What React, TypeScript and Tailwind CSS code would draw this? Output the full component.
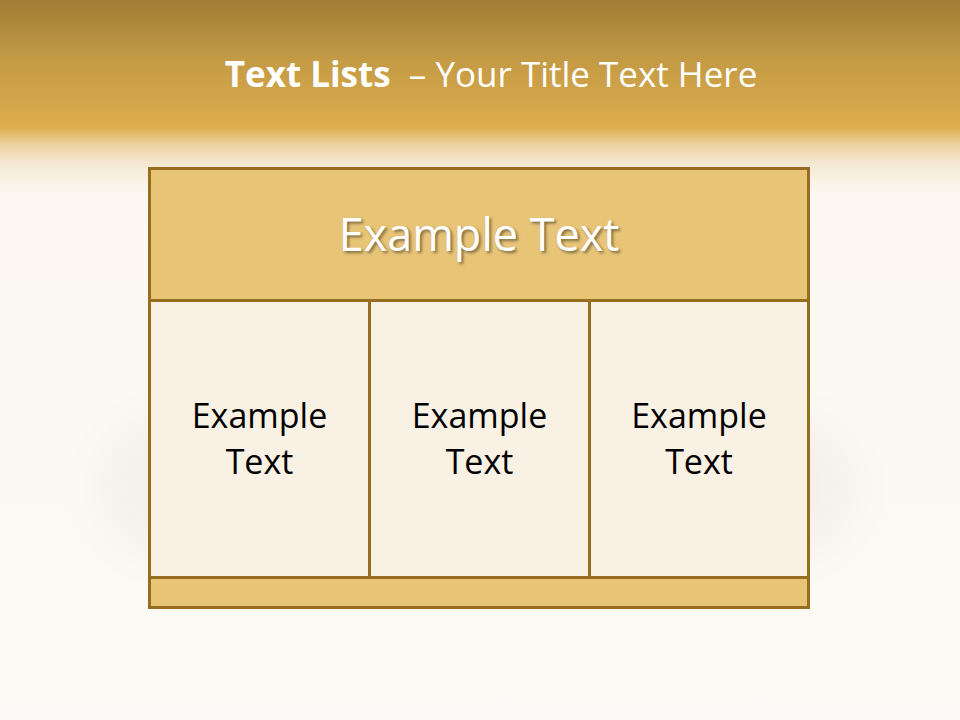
const line = 'border-[#976d1f]';

function Cell({ first }: { first?: boolean }) {
  return (
    <div
      className={`flex items-center justify-center bg-[#f9f1e4] pb-[3px] text-center text-[34px] leading-[46px] text-black ${
        first ? '' : `border-l-[3px] ${line}`
      }`}
    >
      <span>
        Example
        <br />
        Text
      </span>
    </div>
  );
}

export default function App() {
  return (
    <div className="min-h-[720px] w-full bg-[linear-gradient(to_bottom,#a07d35_0px,#c49a45_60px,#dcae4c_127px,#ecd3a2_145px,#f6ead6_165px,#fcf8f1_195px,#fcfaf6_100%)] font-['Open_Sans',sans-serif]">
      {/* Title */}
      <div className="flex h-[167px] justify-center pl-[22px] pt-[49px]">
        <h1 className="text-[35px] leading-[50px] text-white">
          <span className="font-bold">Text Lists</span>
          <span>&nbsp; – Your Title Text Here</span>
        </h1>
      </div>

      {/* Table */}
      <div className="relative">
        {/* soft glow behind the table */}
        <div className="absolute left-[100px] top-[250px] h-[140px] w-[755px] rounded-full bg-black/[0.03] blur-[22px]" />
        <div className={`relative ml-[148px] w-[662px] border-[3px] ${line}`}>
          <div className="flex h-[129px] items-center justify-center bg-[#e8c477] pb-[2px] text-[45px] text-white [text-shadow:2px_2px_3px_rgba(0,0,0,0.45)]">
            Example Text
          </div>
          <div className={`grid h-[280px] grid-cols-[217px_220px_1fr] border-y-[3px] ${line}`}>
            <Cell first />
            <Cell />
            <Cell />
          </div>
          <div className="h-[27px] bg-[#e8c477]" />
        </div>
      </div>
    </div>
  );
}
